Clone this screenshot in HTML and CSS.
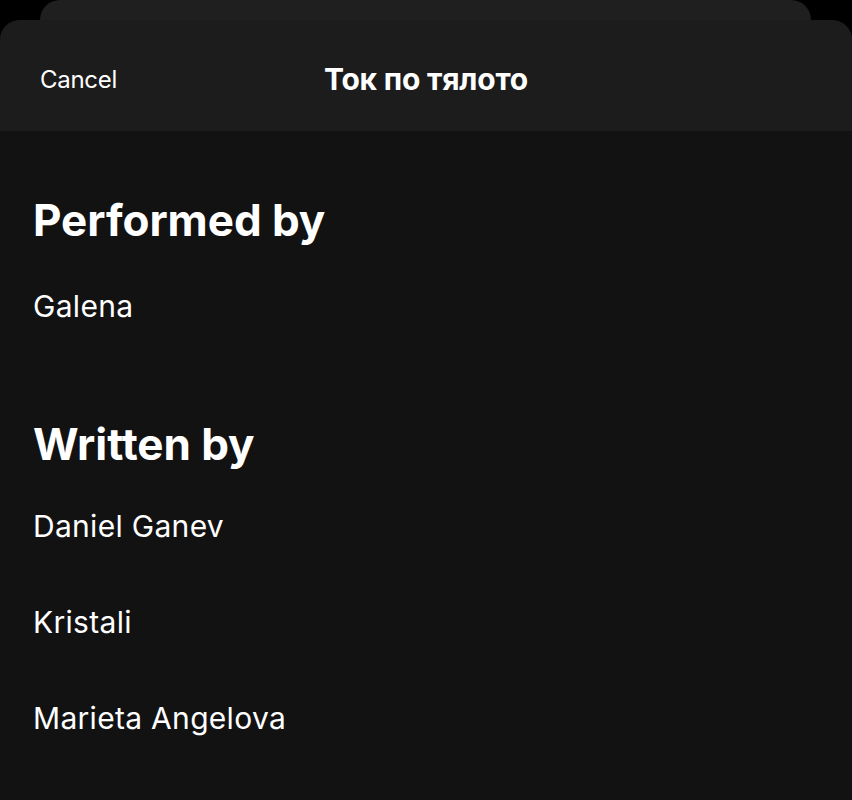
FILE: index.html
```html
<!DOCTYPE html>
<html lang="en">
<head>
<meta charset="utf-8">
<title>Credits</title>
<link rel="stylesheet" href="styles.css">
</head>
<body>
  <div class="back-card"></div>
  <div class="sheet">
    <header class="sheet-header">
      <span class="cancel">Cancel</span>
      <h1 class="title">Ток по тялото</h1>
      <span class="spacer"></span>
    </header>
    <main class="credits">
      <section class="group">
        <h2 class="group-title">Performed by</h2>
        <ul class="names">
          <li class="name">Galena</li>
        </ul>
      </section>
      <section class="group">
        <h2 class="group-title">Written by</h2>
        <ul class="names">
          <li class="name">Daniel Ganev</li>
          <li class="name">Kristali</li>
          <li class="name">Marieta Angelova</li>
        </ul>
      </section>
    </main>
  </div>
</body>
</html>
```

FILE: styles.css
```css
* { box-sizing: border-box; }

html, body {
  margin: 0;
  padding: 0;
  background: #000;
  height: 100%;
}

body {
  font-family: Inter, "Noto Sans", "DejaVu Sans", sans-serif;
  color: #fff;
  overflow: hidden;
}

.back-card {
  height: 20px;
  margin: 0 41px 0 40px;
  background: #1f1f1f;
  border-radius: 20px 20px 0 0;
}

.sheet {
  background: #121212;
  border-radius: 20px 20px 0 0;
  overflow: hidden;
  min-height: 780px;
}

.sheet-header {
  height: 111px;
  background: #1c1c1c;
  display: grid;
  grid-template-columns: 1fr auto 1fr;
  align-items: center;
  padding: 6px 40px 0 40px;
}

.cancel {
  font-size: 24px;
  font-weight: 400;
  letter-spacing: -0.3px;
  color: #fff;
  margin-top: 2px;
}

.title {
  margin: 0;
  font-size: 30px;
  font-weight: 700;
  letter-spacing: -0.2px;
}

.credits {
  padding: 0 33px;
}

.group-title {
  margin: 0;
  font-size: 44px;
  line-height: 52px;
  font-weight: 700;
  letter-spacing: -0.05px;
}

.credits .group:first-child .group-title { margin-top: 63px; }

.group + .group .group-title { margin-top: 92px; }

.names {
  list-style: none;
  margin: 0;
  padding: 0;
}

.name {
  font-size: 30px;
  line-height: 40px;
  font-weight: 400;
  letter-spacing: 0.3px;
  margin-top: 40px;
}

.group + .group .name:first-child { margin-top: 36px; }

.name + .name { margin-top: 56px; }
```
